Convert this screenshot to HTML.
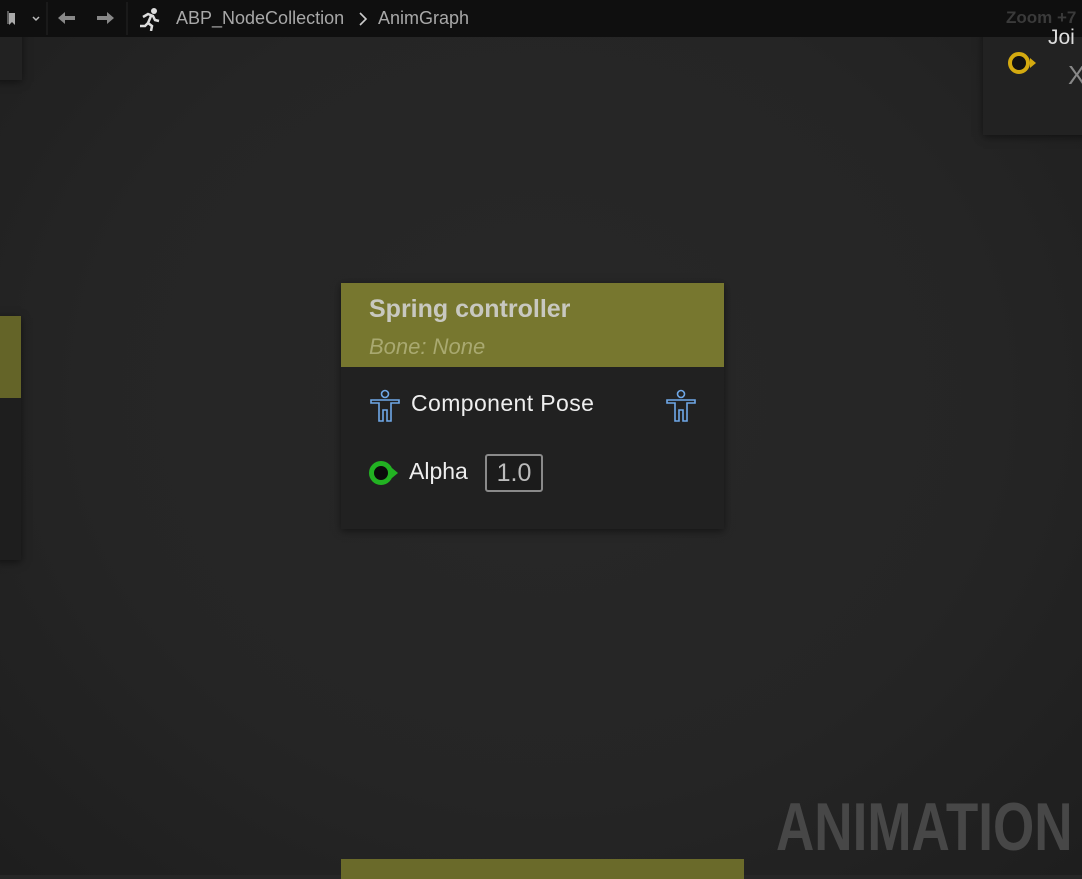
<!DOCTYPE html>
<html><head><style>
body{margin:0;width:1082px;height:875px;overflow:hidden;background:#262626;font-family:"Liberation Sans",sans-serif;position:relative}
.vig{position:absolute;inset:0;background:radial-gradient(ellipse at 50% 45%,#282828 0%,#252525 60%,#1e1e1e 100%)}
.top{position:absolute;left:0;top:0;width:1082px;height:37px;background:#0f0f0f}
.t{position:absolute;color:#a8a8a8;font-size:18px;top:8px}
.node{position:absolute;background:#212121;box-shadow:0 2px 8px rgba(0,0,0,.5)}
</style></head><body>
<div class="vig"></div>
<div class="node" style="left:-5px;top:30px;width:27px;height:50px;background:#222"></div>
<div class="node" style="left:-5px;top:316px;width:26px;height:244px;background:#1e1e1e"></div>
<div style="position:absolute;left:0;top:316px;width:21px;height:82px;background:#646428"></div>
<div class="node" style="left:983px;top:30px;width:110px;height:105px;background:#222"></div>
<div style="position:absolute;left:1008px;top:52px;width:22px;height:22px;border:4px solid #d4aa10;border-radius:50%;box-sizing:border-box;background:#111"></div>
<div style="position:absolute;left:1030px;top:58px;width:0;height:0;border-left:6px solid #d4aa10;border-top:5px solid transparent;border-bottom:5px solid transparent"></div>
<div style="position:absolute;left:1068px;top:60px;color:#888;font-size:26px">X</div>
<div class="top"></div>
<div style="position:absolute;left:1048px;top:26px;color:#ddd;font-size:21px">Joi</div>
<svg style="position:absolute;left:6px;top:10px" width="34" height="18"><path d="M3 3h6v12l-3-3-3 3z" fill="#aaa"/><path d="M2 1v13" stroke="#777" stroke-width="1.5"/><path d="M27 7l3 3 3-3" stroke="#bbb" stroke-width="1.5" fill="none"/></svg>
<div style="position:absolute;left:46px;top:2px;width:2px;height:33px;background:#1a1a1a"></div>
<svg style="position:absolute;left:56px;top:9px" width="60" height="18"><path d="M2 9l7-6v4h10v4H9v4z" fill="#888"/><path d="M58 9l-7-6v4H41v4h10v4z" fill="#888"/></svg>
<div style="position:absolute;left:126px;top:2px;width:2px;height:33px;background:#1a1a1a"></div>
<svg style="position:absolute;left:138px;top:7px" width="24" height="24"><circle cx="16" cy="4" r="3" fill="#ddd"/><path d="M5 10l5-3 5 2 2 4 4 1M13 9l-3 7 4 3 -1 5M10 16l-3 3H2" stroke="#ddd" stroke-width="2.5" fill="none"/></svg>
<div class="t" style="left:176px">ABP_NodeCollection</div>
<svg style="position:absolute;left:358px;top:12px" width="10" height="14"><path d="M2 1l6 6-6 6" stroke="#ccc" stroke-width="1.6" fill="none"/></svg>
<div class="t" style="left:378px">AnimGraph</div>
<div style="position:absolute;left:1006px;top:8px;color:#3a3a3a;font-size:17px;font-weight:bold">Zoom +7</div>
<div class="node" style="left:341px;top:283px;width:383px;height:246px"></div>
<div style="position:absolute;left:341px;top:283px;width:383px;height:84px;background:#77772f"></div>
<div style="position:absolute;left:369px;top:295px;color:#c8c8c0;font-size:25px;font-weight:bold">Spring controller</div>
<div style="position:absolute;left:369px;top:334px;color:#a9a970;font-size:22px;font-style:italic">Bone: None</div>
<svg style="position:absolute;left:370px;top:389px" width="30" height="34"><g stroke="#6fa8e8" stroke-width="1.6" fill="none"><circle cx="15" cy="5" r="3.5"/><path d="M1 11h28v3h-8v18h-4V21h-4v11H9V14H1z"/></g></svg>
<svg style="position:absolute;left:666px;top:389px" width="30" height="34"><g stroke="#6fa8e8" stroke-width="1.6" fill="none"><circle cx="15" cy="5" r="3.5"/><path d="M1 11h28v3h-8v18h-4V21h-4v11H9V14H1z"/></g></svg>
<div style="position:absolute;left:411px;top:390px;color:#eee;font-size:23px;letter-spacing:0.4px">Component Pose</div>
<div style="position:absolute;left:369px;top:461px;width:24px;height:24px;border:5px solid #22b222;border-radius:50%;box-sizing:border-box;background:#0b0b0b"></div>
<div style="position:absolute;left:392px;top:468px;border-left:6px solid #22b222;border-top:5px solid transparent;border-bottom:5px solid transparent"></div>
<div style="position:absolute;left:409px;top:458px;color:#eee;font-size:23px">Alpha</div>
<div style="position:absolute;left:485px;top:454px;width:58px;height:38px;border:2px solid #8a8a8a;border-radius:3px;box-sizing:border-box;background:#1b1b1b;color:#bbb;font-size:25px;text-align:center;line-height:34px">1.0</div>
<div style="position:absolute;left:341px;top:859px;width:403px;height:20px;background:#6a6a2a"></div>
<div style="position:absolute;left:776px;top:788px;color:#474747;font-size:68px;font-weight:bold;transform:scaleX(0.78);transform-origin:0 0;white-space:nowrap">ANIMATION</div>
</body></html>
